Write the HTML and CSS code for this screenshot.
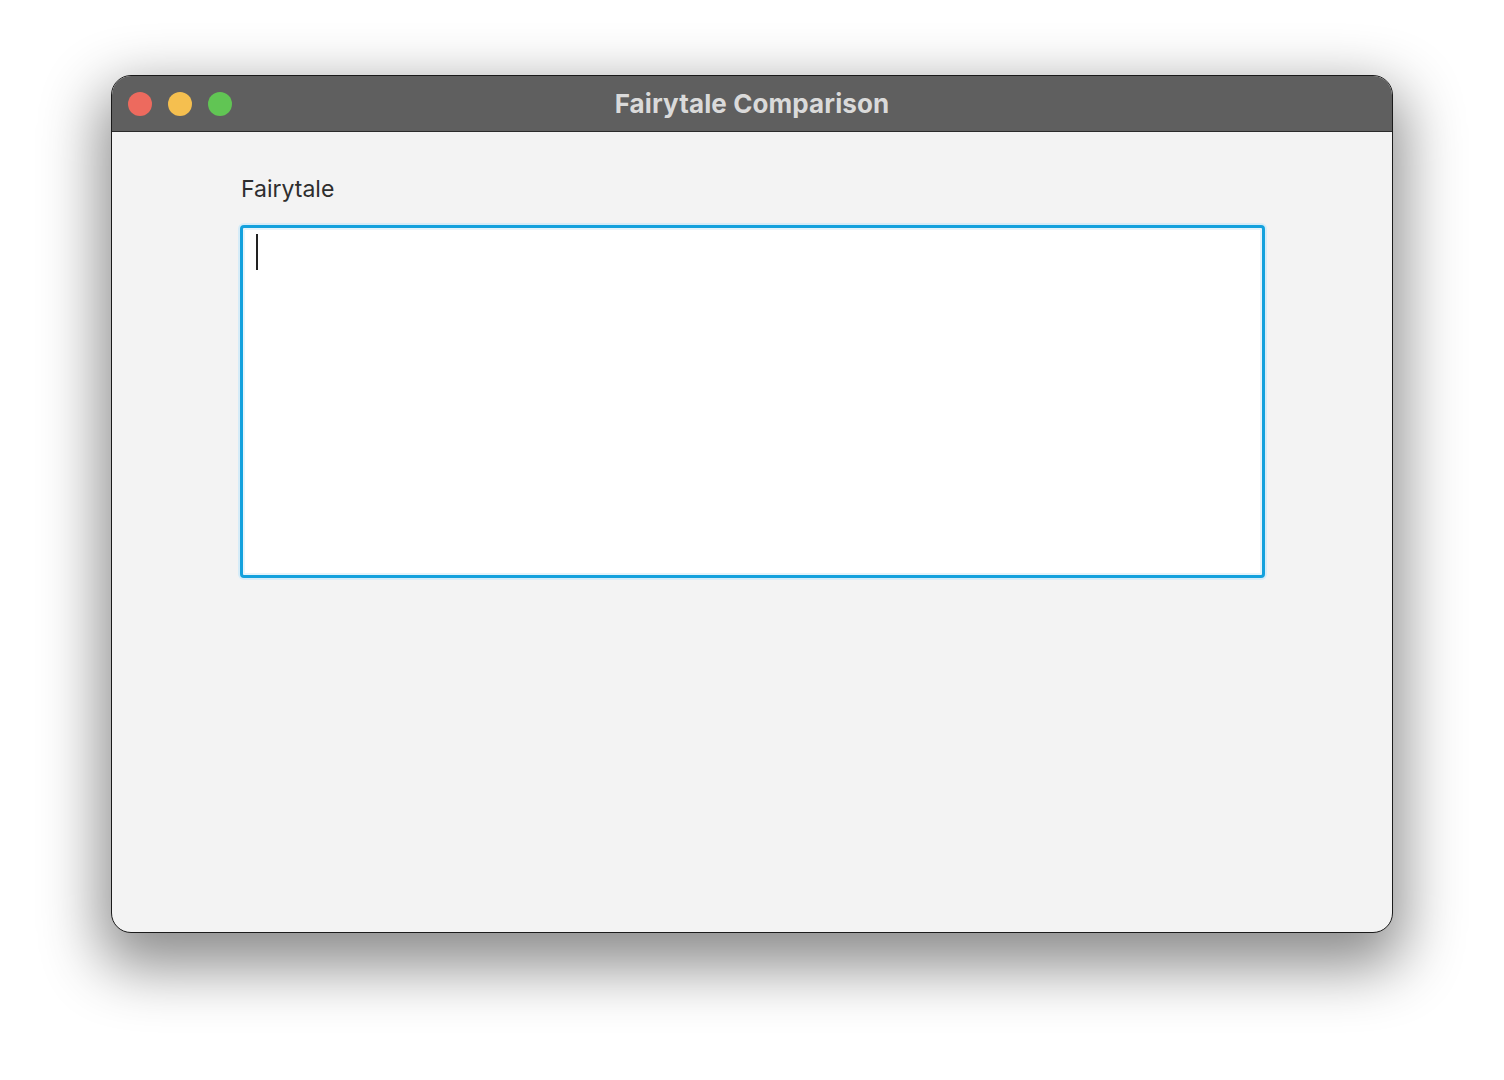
FILE: index.html
```html
<!DOCTYPE html>
<html lang="en">
<head>
<meta charset="utf-8">
<title>Fairytale Comparison</title>
<link rel="stylesheet" href="styles.css">
</head>
<body>
  <div class="window">
    <div class="titlebar">
      <div class="lights">
        <span class="light red"></span>
        <span class="light yellow"></span>
        <span class="light green"></span>
      </div>
      <div class="title">Fairytale Comparison</div>
      <div class="spacer"></div>
    </div>
    <div class="content">
      <div class="label">Fairytale</div>
      <div class="field"><span class="caret"></span></div>
    </div>
  </div>
</body>
</html>
```
FILE: styles.css
```css
* { box-sizing: border-box; }
html, body {
  margin: 0;
  padding: 0;
  background: #ffffff;
  width: 1504px;
  height: 1080px;
  overflow: hidden;
}
body {
  padding: 75px 0 0 111px;
  font-family: Inter, "Liberation Sans", sans-serif;
}
.window {
  width: 1282px;
  height: 858px;
  border: 1px solid #1a1a1a;
  border-radius: 20px;
  background: #f3f3f3;
  overflow: hidden;
  box-shadow: 0 24px 60px 10px rgba(0, 0, 0, 0.45);
  display: flex;
  flex-direction: column;
}
.titlebar {
  height: 56px;
  flex: 0 0 56px;
  background: #5f5f5f;
  border-bottom: 1px solid #2a2a2a;
  display: grid;
  grid-template-columns: 1fr auto 1fr;
  align-items: center;
}
.lights {
  display: flex;
  gap: 16px;
  padding-left: 16px;
}
.light {
  width: 24px;
  height: 24px;
  border-radius: 50%;
  display: block;
}
.red { background: #ed6a5e; }
.yellow { background: #f5bf4f; }
.green { background: #61c554; }
.title {
  color: #dadada;
  font-weight: 700;
  font-size: 26px;
  letter-spacing: 0.1px;
  padding-bottom: 1px;
}
.content {
  padding: 42px 127px 0 128px;
}
.label {
  color: #2e2e2e;
  font-size: 23px;
  line-height: 30px;
  padding-left: 1px;
  margin-bottom: 21px;
}
.field {
  height: 353px;
  border: 3px solid #13a1dd;
  border-radius: 4px;
  background: #ffffff;
  box-shadow: 0 0 0 2px #d6ecf8, inset 0 0 0 2px #e6f4fb;
  padding: 6px 0 0 13px;
}
.caret {
  display: block;
  width: 2px;
  height: 36px;
  background: #222222;
}
```
